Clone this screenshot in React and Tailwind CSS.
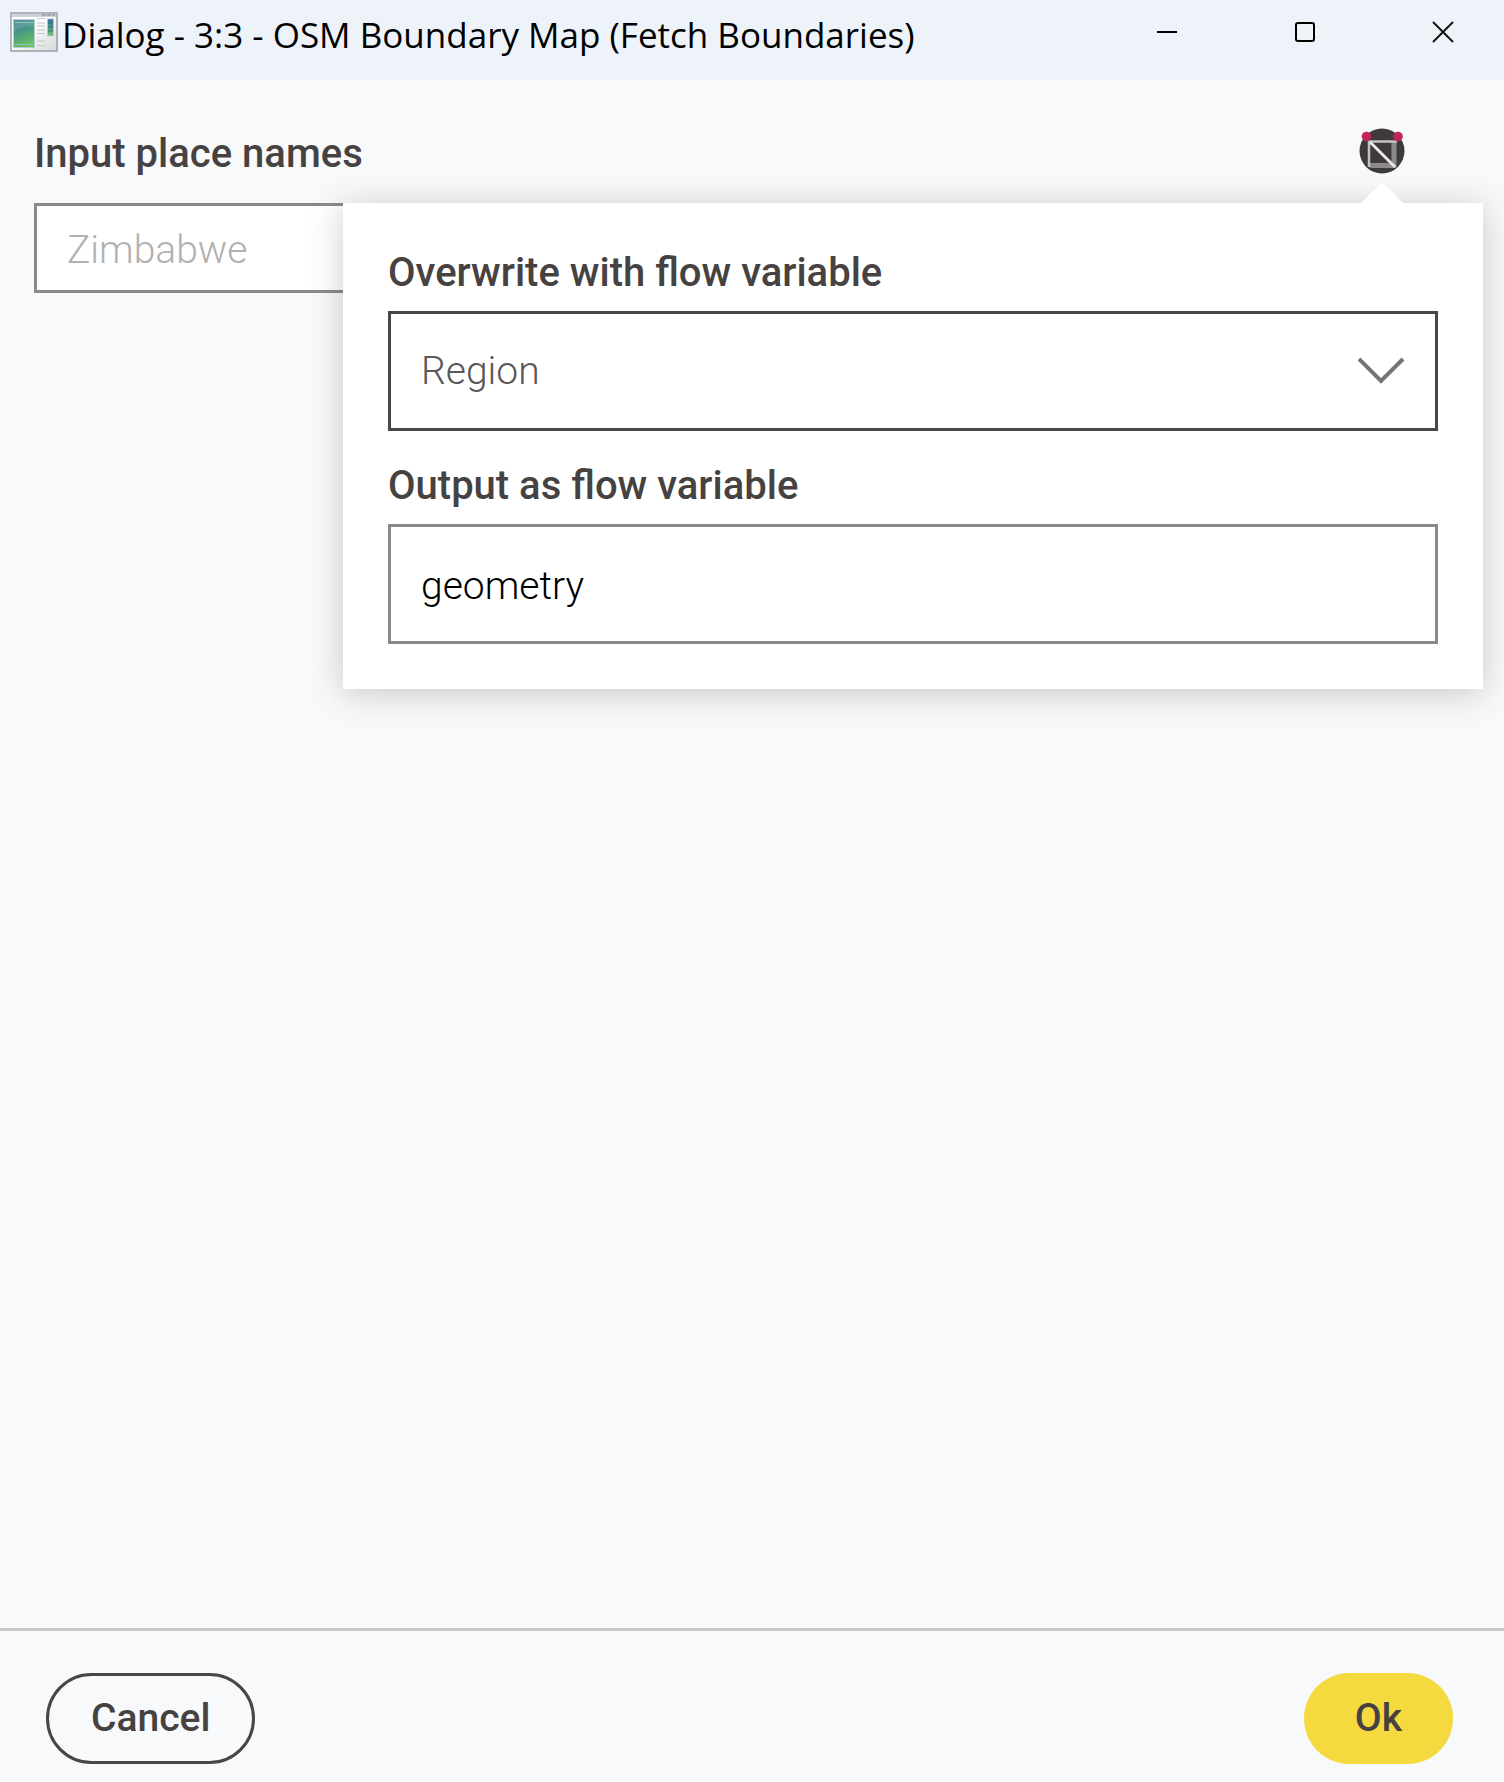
import { useState } from "react";

function AppIcon() {
  return (
    <svg className="h-10 w-12 shrink-0" viewBox="0 0 48 40" aria-hidden="true">
      <defs>
        <linearGradient id="screen" x1="0" y1="0" x2="0.35" y2="1">
          <stop offset="0" stopColor="#3f789f" />
          <stop offset="0.5" stopColor="#459a83" />
          <stop offset="1" stopColor="#6dbb63" />
        </linearGradient>
        <linearGradient id="side" x1="0" y1="0" x2="0" y2="1">
          <stop offset="0" stopColor="#3c6f9c" />
          <stop offset="1" stopColor="#6cc07a" />
        </linearGradient>
        <linearGradient id="paper" x1="0" y1="0" x2="1" y2="1">
          <stop offset="0.4" stopColor="#ffffff" />
          <stop offset="1" stopColor="#d4d6d8" />
        </linearGradient>
      </defs>
      <rect x="1" y="1" width="46" height="38" fill="url(#paper)" stroke="#9a9fa4" strokeWidth="1.5" />
      <rect x="2" y="2" width="44" height="3" fill="#c9d3da" />
      <path d="M32 3h13" stroke="#9fa6ab" strokeWidth="2" strokeDasharray="4 1" />
      <rect x="3.5" y="7.5" width="21" height="28" fill="url(#screen)" stroke="#b5cfd0" />
      <path d="M4 19Q13 14 24 14V8H4z" fill="#fff" opacity="0.13" />
      <path d="M5 10.500h18M5 32.500h18" stroke="#8fc5b5" />
      <path d="M27 6.500h8M27 11h8M27 14h8M27 18h8M27 21.500h8M27 29h8M27 33.500h8" stroke="#c2c4c5" />
      <rect x="37.500" y="7" width="6" height="17" fill="url(#side)" stroke="#b9cdd6" strokeWidth="0.6" />
      <path d="M38 11h5M38 15h5M38 19h5" stroke="#2f6678" strokeWidth="0.8" />
    </svg>
  );
}

function FlowVariableIcon() {
  return (
    <svg className="h-12 w-12" viewBox="0 0 48 48" aria-hidden="true">
      <circle cx="24" cy="25" r="22.500" fill="#3e3a39" />
      <path d="M36 16v23.500H12" fill="none" stroke="#8d8b8a" strokeWidth="5" />
      <path d="M11 41V15.500h28" fill="none" stroke="#c4c3c2" strokeWidth="2.500" />
      <path d="M12 16l25 25" stroke="#e8e8e8" strokeWidth="3" />
      <circle cx="8.500" cy="10.500" r="4.800" fill="#c0245a" />
      <circle cx="40" cy="10.500" r="4.800" fill="#c0245a" />
    </svg>
  );
}

function TitleBar() {
  return (
    <header className="flex h-20 items-start justify-between bg-gradient-to-r from-[#eef2fb] to-[#edf3f8] to-40%">
      <div className="flex items-start gap-1 pl-[10px]">
        <div className="pt-3">
          <AppIcon />
        </div>
        <h1 className="pt-[11px] font-['Open_Sans','Noto_Sans',sans-serif] text-[35px] leading-12 whitespace-nowrap text-black">
          Dialog - 3:3 - OSM Boundary Map (Fetch Boundaries)
        </h1>
      </div>
      <div className="flex gap-4 text-black">
        <button type="button" aria-label="Minimize" className="flex h-16 w-[122px] items-center justify-center">
          <svg className="h-6 w-6" viewBox="0 0 24 24" stroke="currentColor" strokeWidth="2">
            <path d="M2 12h20" />
          </svg>
        </button>
        <button type="button" aria-label="Maximize" className="flex h-16 w-[122px] items-center justify-center">
          <svg className="h-6 w-6" viewBox="0 0 24 24" fill="none" stroke="currentColor" strokeWidth="2">
            <rect x="3" y="3" width="18" height="18" rx="2" />
          </svg>
        </button>
        <button type="button" aria-label="Close" className="flex h-16 w-[122px] items-center justify-center">
          <svg className="h-6 w-6" viewBox="0 0 24 24" stroke="#111" strokeWidth="2">
            <path d="M2 2l20 20M22 2L2 22" />
          </svg>
        </button>
      </div>
    </header>
  );
}

function FlowVariablePopover() {
  const [variable, setVariable] = useState("Region");
  const [output, setOutput] = useState("geometry");
  return (
    <div className="absolute top-full right-[21px] left-[343px] z-10 bg-white px-[45px] pt-12 pb-[45px] shadow-[0_4px_32px_rgba(62,58,57,0.25)]">
      <div className="absolute -top-[21px] right-20 h-[21px] w-[42px] bg-white [clip-path:polygon(50%_0,100%_100%,0_100%)]" />
      <label htmlFor="overwrite" className="block text-[40px] leading-11 font-medium">
        Overwrite with flow variable
      </label>
      <div className="relative mt-4">
        <select
          id="overwrite"
          value={variable}
          onChange={(e) => setVariable(e.target.value)}
          className="block h-30 w-full appearance-none border-3 border-[#4a4645] bg-white pr-20 pl-[30px] text-[39px] font-light text-[#5a5756] outline-none"
        >
          <option>Region</option>
        </select>
        <svg
          className="pointer-events-none absolute top-9 right-8 h-12 w-12"
          viewBox="0 0 48 48"
          fill="none"
          stroke="#777473"
          strokeWidth="4"
          aria-hidden="true"
        >
          <path d="M1 12l22 22 22-22" />
        </svg>
      </div>
      <label htmlFor="output" className="mt-[33px] block text-[40px] leading-11 font-medium">
        Output as flow variable
      </label>
      <input
        id="output"
        type="text"
        value={output}
        onChange={(e) => setOutput(e.target.value)}
        className="mt-4 block h-30 w-full border-3 border-[#8c8a89] bg-white px-[30px] pt-1 text-[39px] font-light text-black outline-none"
      />
    </div>
  );
}

export default function App() {
  return (
    <div className="flex min-h-screen flex-col bg-[#f8f9fb] font-[Roboto,sans-serif] text-[#464241]">
      <TitleBar />
      <main className="grow">
        <div className="relative flex h-[123px] items-start justify-between pt-[46px] pr-[98px] pl-[34px]">
          <label htmlFor="places" className="pt-[6px] text-[40px] leading-11 font-medium">
            Input place names
          </label>
          <button type="button" aria-label="Flow variables">
            <FlowVariableIcon />
          </button>
          <FlowVariablePopover />
        </div>
        <div className="pr-[98px] pl-[34px]">
          <input
            id="places"
            type="text"
            disabled
            defaultValue="Zimbabwe"
            className="block h-[90px] w-full border-3 border-[#8c8a89] bg-white px-[30px] pt-1 text-[39px] font-light text-[#b2b0b0]"
          />
        </div>
      </main>
      <footer className="flex items-center justify-between border-t-3 border-[#c6c8c9] pt-[42px] pr-[51px] pb-[18px] pl-[46px]">
        <button type="button" className="h-[91px] rounded-full border-3 border-[#4a4645] px-[42px] text-[39px] font-medium">
          Cancel
        </button>
        <button type="button" className="h-[91px] rounded-full bg-[#f5da3f] px-[51px] text-[39px] font-medium">
          Ok
        </button>
      </footer>
    </div>
  );
}
